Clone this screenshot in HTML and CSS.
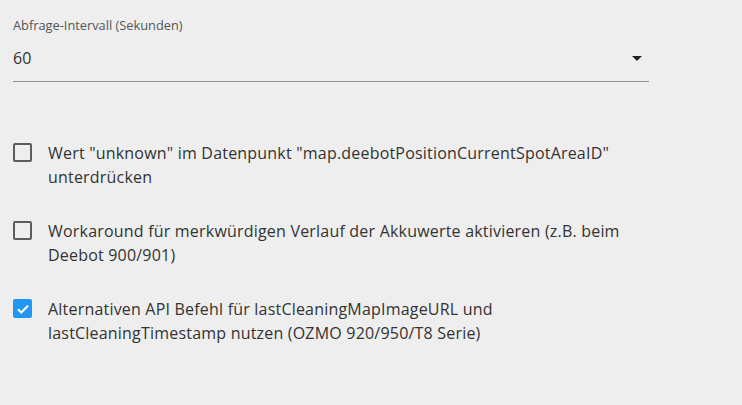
FILE: index.html
```html
<!DOCTYPE html>
<html lang="de">
<head>
    <meta charset="UTF-8">
    <title>Einstellungen</title>
    <link rel="stylesheet" href="styles.css">
</head>
<body>
    <div class="settings">
        <!-- Intervall -->
        <div class="field">
            <label class="field-label">Abfrage-Intervall (Sekunden)</label>
            <div class="select">
                <span class="select-value">60</span>
                <span class="select-arrow"></span>
            </div>
        </div>

        <div class="options">
            <label class="option">
                <span class="checkbox"></span>
                <span class="option-text">Wert "unknown" im Datenpunkt "map.deebotPositionCurrentSpotAreaID" unterdrücken</span>
            </label>
            <label class="option">
                <span class="checkbox"></span>
                <span class="option-text">Workaround für merkwürdigen Verlauf der Akkuwerte aktivieren (z.B. beim Deebot 900/901)</span>
            </label>
            <label class="option">
                <span class="checkbox checked">
                    <svg viewBox="0 0 18 18" width="18" height="18"><path d="M4 9.2l3.3 3.3L14 5.8" fill="none" stroke="#fff" stroke-width="2.2"/></svg>
                </span>
                <span class="option-text">Alternativen API Befehl für lastCleaningMapImageURL und lastCleaningTimestamp nutzen (OZMO 920/950/T8 Serie)</span>
            </label>
        </div>
    </div>
</body>
</html>
```

FILE: styles.css
```css
body {
    margin: 0;
    background: #eeeeee;
    font-family: 'Open Sans', sans-serif;
    color: #333333;
}

.settings {
    padding: 15px 0 0 13px;
    width: 647px;
}

.field {
    width: 636px;
}

.field-label {
    display: block;
    font-size: 12.8px;
    color: #555555;
    line-height: 20px;
}

.select {
    display: flex;
    justify-content: space-between;
    align-items: center;
    height: 46px;
    border-bottom: 1px solid #949494;
}

.select-value {
    font-size: 16px;
}

.select-arrow {
    width: 0;
    height: 0;
    border-left: 5px solid transparent;
    border-right: 5px solid transparent;
    border-top: 5px solid #222222;
    margin-right: 7px;
}

.options {
    padding-top: 59px;
    display: flex;
    flex-direction: column;
    gap: 30px;
}

.option {
    display: flex;
    align-items: flex-start;
    gap: 16px;
}

.checkbox {
    flex: none;
    box-sizing: border-box;
    width: 19px;
    height: 19px;
    margin-top: 2px;
    border: 2px solid #5c5c5c;
    border-radius: 2px;
}

.checkbox.checked {
    background: #2196f3;
    border-color: #2196f3;
    display: flex;
    align-items: center;
    justify-content: center;
}

.checkbox.checked svg {
    flex: none;
}

.option-text {
    font-size: 16px;
    line-height: 24px;
    letter-spacing: 0.2px;
}
```
